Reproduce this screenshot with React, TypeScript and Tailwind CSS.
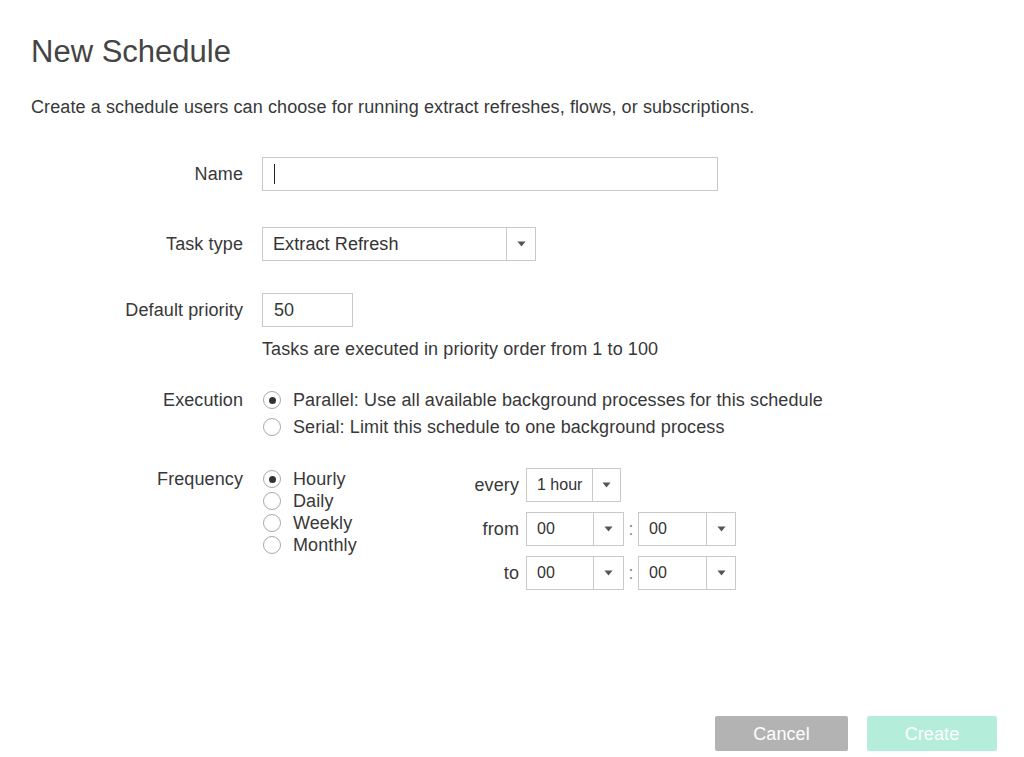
import React from "react";

function Arrow() {
  return (
    <svg width="9" height="6" viewBox="0 0 9 6">
      <path d="M0.5 0.5 H8.5 L4.5 5.5 Z" fill="#555" />
    </svg>
  );
}

function Select({ value, w, arrowW, small }: { value: string; w: string; arrowW: string; small?: boolean }) {
  return (
    <div className={`flex h-[34px] border border-[#c9c9c9] bg-white ${w}`}>
      <div className={`flex-1 flex items-center pl-[10px] text-[#333] ${small ? "text-[16px] tracking-[0px]" : ""}`}>{value}</div>
      <div className={`flex items-center justify-center border-l border-[#c9c9c9] ${arrowW}`}>
        <Arrow />
      </div>
    </div>
  );
}

function Radio({ checked, label }: { checked?: boolean; label: string }) {
  return (
    <div className="flex items-center gap-[12px]">
      <div className="ml-[1px] w-[18px] h-[18px] rounded-full border border-[#a9a9a9] flex items-center justify-center bg-white shrink-0">
        {checked && <div className="w-[7px] h-[7px] rounded-full bg-[#333]" />}
      </div>
      <span>{label}</span>
    </div>
  );
}

export default function App() {
  return (
    <div className="w-[1024px] h-[757px] bg-white flex flex-col font-['Liberation_Sans',Arial,sans-serif] text-[#383838] text-[18px] leading-[20px] tracking-[0.1px]">
      <div className="pl-[31px]">
        <h1 className="mt-[34px] text-[31px] leading-[36px] text-[#444] font-normal tracking-[0px]">New Schedule</h1>
        <p className="mt-[27px]">
          Create a schedule users can choose for running extract refreshes, flows, or subscriptions.
        </p>

        {/* Name */}
        <div className="mt-[40px] flex items-center">
          <div className="w-[212px] text-right">Name</div>
          <div className="ml-[19px] w-[456px] h-[34px] border border-[#c9c9c9] flex items-center pl-[11px]">
            <div className="w-[1px] h-[20px] bg-[#222]" />
          </div>
        </div>

        {/* Task type */}
        <div className="mt-[36px] flex items-center">
          <div className="w-[212px] text-right">Task type</div>
          <div className="ml-[19px]">
            <Select value="Extract Refresh" w="w-[274px]" arrowW="w-[29px]" />
          </div>
        </div>

        {/* Priority */}
        <div className="mt-[32px] flex items-center">
          <div className="w-[212px] text-right">Default priority</div>
          <div className="ml-[19px] w-[91px] h-[34px] border border-[#c9c9c9] flex items-center pl-[11px]">50</div>
        </div>
        <div className="mt-[12px] ml-[231px]">Tasks are executed in priority order from 1 to 100</div>

        {/* Execution */}
        <div className="mt-[31px] flex items-start">
          <div className="w-[212px] text-right">Execution</div>
          <div className="ml-[19px] flex flex-col gap-[7px]">
            <Radio checked label="Parallel: Use all available background processes for this schedule" />
            <Radio label="Serial: Limit this schedule to one background process" />
          </div>
        </div>

        {/* Frequency */}
        <div className="mt-[30px] flex items-start">
          <div className="w-[212px] text-right leading-[22px] pt-[1px]">Frequency</div>
          <div className="ml-[19px] flex items-start">
            <div className="w-[200px] flex flex-col leading-[22px] pt-[1px]">
              <Radio checked label="Hourly" />
              <Radio label="Daily" />
              <Radio label="Weekly" />
              <Radio label="Monthly" />
            </div>
            <div className="mt-[1px] grid grid-cols-[57px_auto] gap-x-[7px] gap-y-[10px] items-center">
              <div className="text-right">every</div>
              <div>
                <Select small value="1 hour" w="w-[95px]" arrowW="w-[28px]" />
              </div>
              <div className="text-right">from</div>
              <div className="flex items-center">
                <Select small value="00" w="w-[98px]" arrowW="w-[30px]" />
                <span className="w-[14px] text-center text-[#888]">:</span>
                <Select small value="00" w="w-[98px]" arrowW="w-[29px]" />
              </div>
              <div className="text-right">to</div>
              <div className="flex items-center">
                <Select small value="00" w="w-[98px]" arrowW="w-[30px]" />
                <span className="w-[14px] text-center text-[#888]">:</span>
                <Select small value="00" w="w-[98px]" arrowW="w-[29px]" />
              </div>
            </div>
          </div>
        </div>
      </div>

      <div className="mt-auto mb-[6px] mr-[27px] flex justify-end gap-[19px]">
        <button className="w-[133px] h-[35px] bg-[#b3b3b3] text-white rounded-[2px]">Cancel</button>
        <button className="w-[130px] h-[35px] bg-[#b4edd9] text-white rounded-[2px]">Create</button>
      </div>
    </div>
  );
}
